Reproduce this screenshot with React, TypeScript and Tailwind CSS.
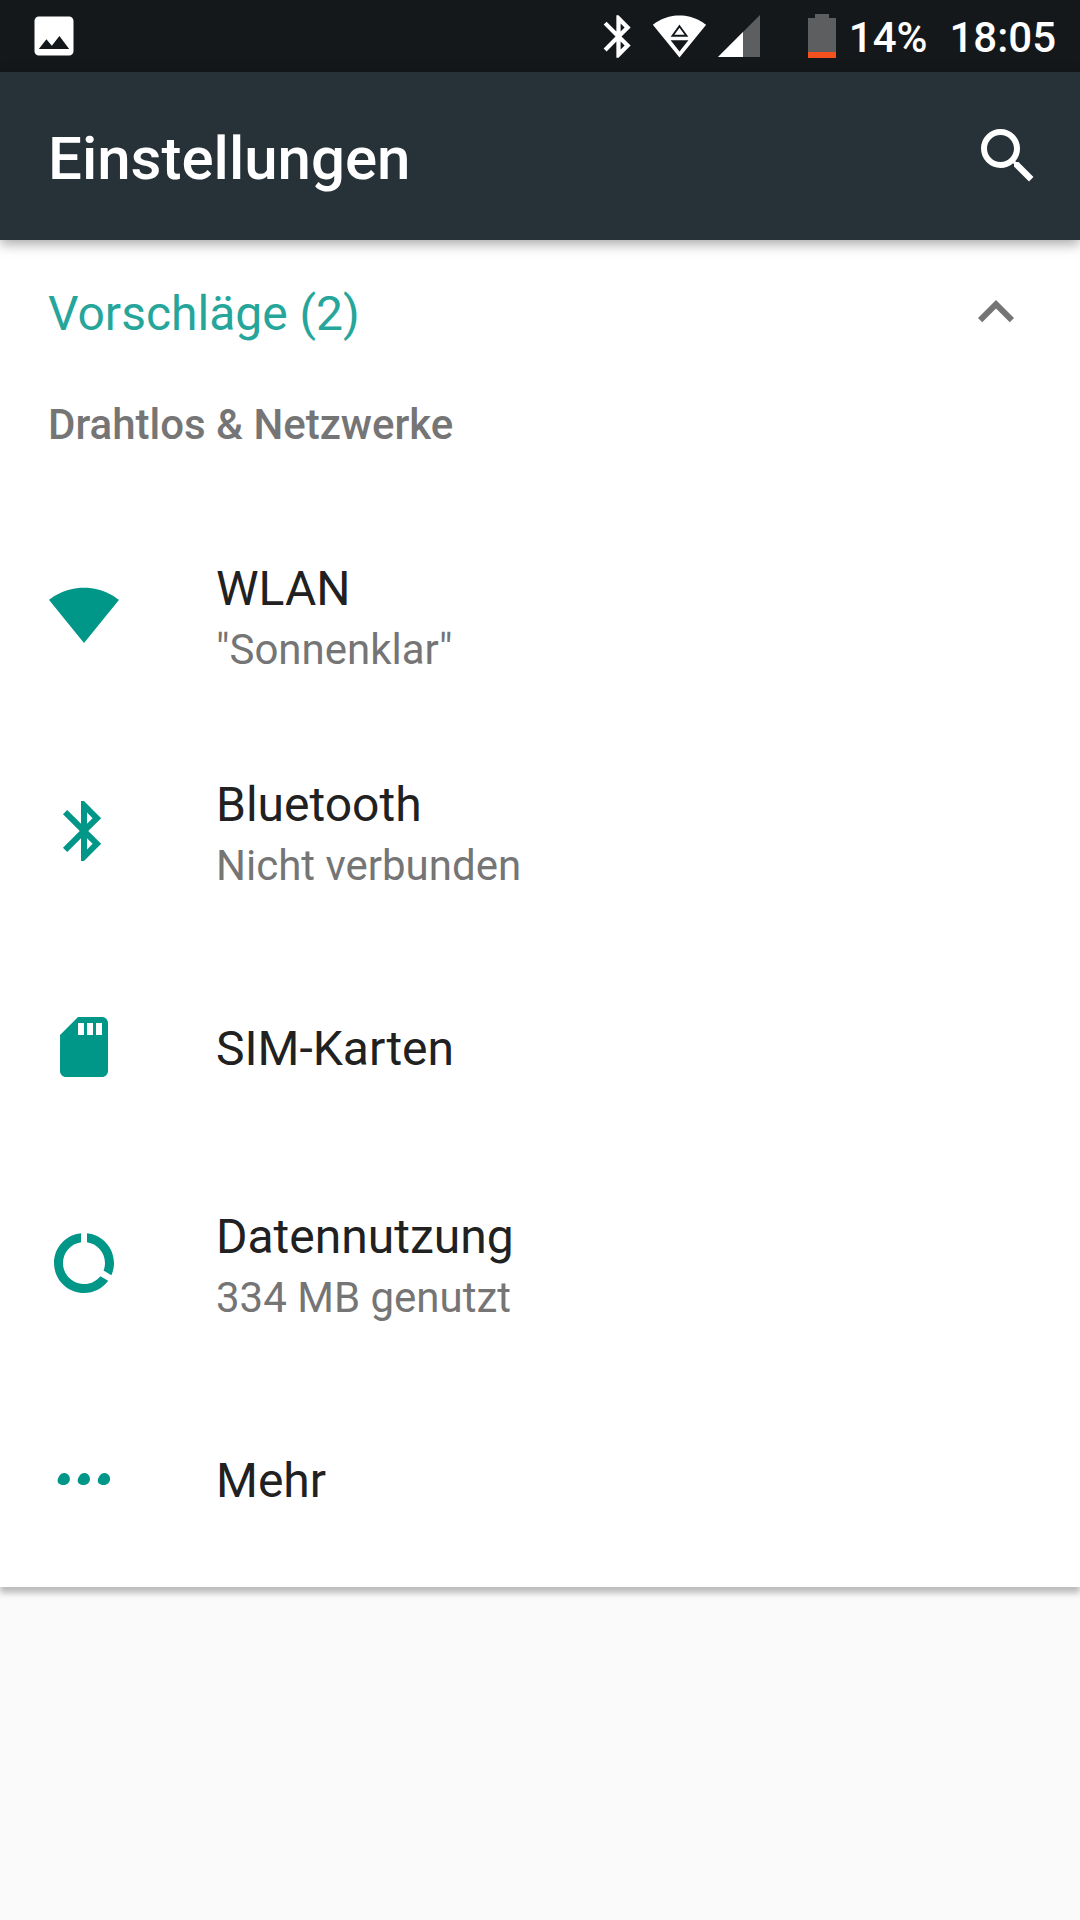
import type { ReactNode } from "react";

const BLUETOOTH =
  "M17.71 7.71L12 2h-1v7.59L6.41 5 5 6.41 10.59 12 5 17.59 6.41 19 11 14.41V22h1l5.71-5.71-4.3-4.29 4.3-4.29zM13 5.83l1.88 1.88L13 9.59V5.83zm1.88 10.46L13 18.17v-3.76l1.88 1.88z";
const WIFI = "M13 22L25.6 6.5C25.1 6.1 20.3 2.1 13 2.1S.9 6.1.4 6.5L13 22z";
const SIM =
  "M18 2h-8L4.02 8 4 20c0 1.1.9 2 2 2h12c1.1 0 2-.9 2-2V4c0-1.1-.9-2-2-2zm-6 6h-2V4h2v4zm3 0h-2V4h2v4zm3 0h-2V4h2v4z";
const DATA =
  "M13 2.05v3.03c3.39.49 6 3.39 6 6.92 0 .9-.18 1.75-.48 2.54l2.6 1.53c.56-1.24.88-2.62.88-4.07 0-5.18-3.95-9.45-9-9.95zM12 19c-3.87 0-7-3.13-7-7 0-3.53 2.61-6.43 6-6.92V2.05c-5.06.5-9 4.76-9 9.95 0 5.52 4.47 10 9.99 10 3.31 0 6.24-1.61 8.06-4.09l-2.6-1.53C16.17 17.98 14.21 19 12 19z";
const DOTS =
  "M5.3 10c1.2 0 2 .9 2 2s-.9 2-2.1 2c-1.2 0-2-.5-2-1.4 0-1.1 1-2.6 2.1-2.6zM12 10c1.2 0 2 .9 2 2s-.9 2-2.1 2c-1.2 0-2-.5-2-1.4 0-1.1 1-2.6 2.1-2.6zM18.7 10c1.2 0 2 .9 2 2s-.9 2-2.1 2c-1.2 0-2-.5-2-1.4 0-1.1 1-2.6 2.1-2.6z";

function Icon({ d, className }: { d: string; className: string }) {
  return (
    <svg className={className} viewBox="0 0 24 24" fill="currentColor" aria-hidden="true">
      <path d={d} />
    </svg>
  );
}

type Item = { title: string; summary?: string; icon: ReactNode };

const items: Item[] = [
  {
    title: "WLAN",
    summary: '"Sonnenklar"',
    icon: (
      <svg className="w-18 shrink-0" viewBox="0 0 26 24" fill="currentColor" aria-hidden="true">
        <path d={WIFI} />
      </svg>
    ),
  },
  { title: "Bluetooth", summary: "Nicht verbunden", icon: <Icon d={BLUETOOTH} className="size-18 shrink-0" /> },
  { title: "SIM-Karten", icon: <Icon d={SIM} className="size-18 shrink-0" /> },
  { title: "Datennutzung", summary: "334 MB genutzt", icon: <Icon d={DATA} className="size-18 shrink-0" /> },
  { title: "Mehr", icon: <Icon d={DOTS} className="size-18 shrink-0" /> },
];

function StatusBar() {
  return (
    <div className="flex h-18 items-center justify-between bg-[#14181b] px-6 text-white">
      <Icon
        className="ml-1 size-[52px]"
        d="M21 19V5c0-1.1-.9-2-2-2H5c-1.1 0-2 .9-2 2v14c0 1.1.9 2 2 2h14c1.1 0 2-.9 2-2zM8.5 13.5l2.5 3.01L14.5 12l4.5 6H5l3.5-4.5z"
      />
      <div className="flex items-center">
        <Icon d={BLUETOOTH} className="size-[51px]" />
        <svg className="ml-2 w-[55px]" viewBox="0 0 26 24" aria-hidden="true">
          <path d={WIFI} fill="currentColor" />
          <path d="M13 7.2l3.3 4.5H9.7L13 7.2z" fill="none" stroke="#14181b" strokeWidth=".9" />
          <path d="M8.8 13.8h8.4L13 19.2z" fill="#14181b" />
        </svg>
        <svg className="ml-[11px] size-[42px]" viewBox="0 0 42 42" aria-hidden="true">
          <path d="M42 0v42H0z" fill="#5c5e60" />
          <path d="M25 17v25H0z" fill="currentColor" />
        </svg>
        <svg className="ml-12 h-11 w-7" viewBox="0 0 28 44" aria-hidden="true">
          <path d="M7 0h14v4h7v40H0V4h7z" fill="#5c5e60" />
          <path d="M0 38h28v6H0z" fill="#f4511e" />
        </svg>
        <div className="ml-[13px] flex gap-[22px] pt-1 text-[42px] leading-[50px] font-medium">
          <span>14%</span>
          <span>18:05</span>
        </div>
      </div>
    </div>
  );
}

export default function App() {
  return (
    <div className="min-h-screen bg-[#fafafa] font-['Roboto',sans-serif]">
      <StatusBar />

      <header className="relative flex h-42 items-center justify-between bg-[#263238] pr-9 pl-12 text-white shadow-[0_4px_12px_rgba(0,0,0,0.35)]">
        <h1 className="pt-1.5 text-[60px] leading-[72px] font-medium">Einstellungen</h1>
        <button type="button" aria-label="Suchen">
          <Icon
            className="size-18"
            d="M15.5 14h-.79l-.28-.27A6.471 6.471 0 0 0 16 9.5 6.5 6.5 0 1 0 9.5 16c1.61 0 3.09-.59 4.23-1.57l.27.28v.79l5 4.99L20.49 19l-4.99-5zm-6 0C7.01 14 5 11.99 5 9.5S7.01 5 9.5 5 14 7.01 14 9.5 11.99 14 9.5 14z"
          />
        </button>
      </header>

      <main className="bg-white shadow-[0_6px_6px_rgba(0,0,0,0.25)]">
        <button type="button" className="flex h-36 w-full items-center justify-between px-12 text-[#26a69a]">
          <span className="pt-1 text-[48px] leading-[66px]">Vorschläge (2)</span>
          <Icon className="size-18 text-[#757575]" d="M12 8l-6 6 1.41 1.41L12 10.83l4.59 4.58L18 14z" />
        </button>

        <h2 className="px-12 pt-[13px] pb-[54px] text-[42px] leading-[56px] font-medium text-[#757575]">
          Drahtlos &amp; Netzwerke
        </h2>

        <ul>
          {items.map((item) => (
            <li key={item.title}>
              <button type="button" className="flex h-54 w-full items-center gap-24 px-12 text-left text-[#009688]">
                {item.icon}
                <span className="flex flex-col pt-[3px]">
                  <span className="text-[48px] leading-[66px] text-[#212121]">{item.title}</span>
                  {item.summary && (
                    <span className="text-[42px] leading-[56px] text-[#757575]">{item.summary}</span>
                  )}
                </span>
              </button>
            </li>
          ))}
        </ul>
      </main>
    </div>
  );
}
